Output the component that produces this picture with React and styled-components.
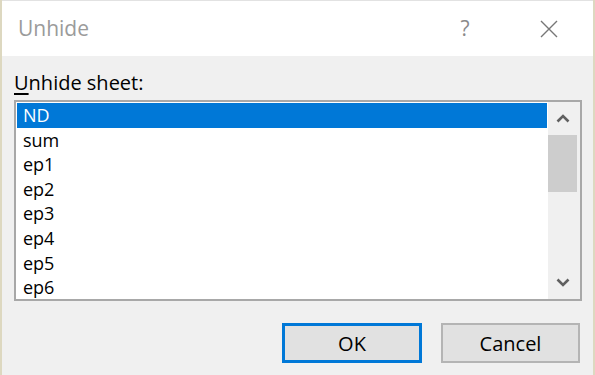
import React from "react";
import styled, { createGlobalStyle } from "styled-components";

const Global = createGlobalStyle`
  html, body { margin: 0; padding: 0; }
  body {
    background: #ddd8c0;
    font-family: "Open Sans", "Noto Sans", sans-serif;
    overflow: hidden;
  }
`;

const Page = styled.div`
  width: 595px;
  height: 375px;
  display: flex;
  background: #ddd8c0;
`;

const Dialog = styled.div`
  flex: 1;
  margin: 0 2px;
  display: flex;
  flex-direction: column;
  background: #f0f0f0;
  border-top: 1px solid #e2e2e2;
`;

const TitleBar = styled.div`
  height: 55px;
  background: #ffffff;
  display: flex;
  align-items: center;
  padding-left: 16px;
`;

const Title = styled.div`
  flex: 1;
  font-size: 21px;
  color: #9b9b9b;
  margin-top: -1px;
`;

const Help = styled.div`
  width: 20px;
  text-align: center;
  font-size: 21px;
  color: #8a8a8a;
  margin-right: 64px;
  margin-top: -1px;
`;

const CloseBtn = styled.div`
  width: 20px;
  height: 20px;
  margin-right: 34px;
  display: flex;
  align-items: center;
  justify-content: center;
`;

const Body = styled.div`
  flex: 1;
  display: flex;
  flex-direction: column;
  padding: 13px 11px 0 12px;
`;

const Label = styled.div`
  font-size: 20px;
  color: #000;
  line-height: 28px;
  margin-bottom: 3px;
  u { text-decoration-thickness: 2px; text-underline-offset: 3px; }
`;

const ListBox = styled.div`
  height: 201px;
  box-sizing: border-box;
  border: 2px solid #a8a8a8;
  background: #fff;
  display: flex;
`;

const Items = styled.div`
  flex: 1;
  padding: 1px 1px 0 1px;
  overflow: hidden;
`;

const Item = styled.div`
  height: 24.6px;
  line-height: 24.6px;
  padding-left: 6px;
  font-size: 18px;
  color: ${(p) => (p.$selected ? "#ffffff" : "#000000")};
  background: ${(p) => (p.$selected ? "#0078d7" : "transparent")};
  white-space: nowrap;
`;

const ScrollBar = styled.div`
  width: 32px;
  background: #f0f0f0;
  display: flex;
  flex-direction: column;
`;

const Arrow = styled.div`
  height: 33px;
  display: flex;
  align-items: center;
  justify-content: center;
  padding-right: 3px;
`;

const Track = styled.div`
  flex: 1;
  display: flex;
  flex-direction: column;
`;

const Thumb = styled.div`
  width: 29px;
  height: 57px;
  background: #cdcdcd;
`;

const Buttons = styled.div`
  display: flex;
  justify-content: flex-end;
  gap: 19px;
  margin-top: 22px;
  padding-right: 2px;
`;

const Button = styled.div`
  width: ${(p) => p.$w}px;
  height: 40px;
  box-sizing: border-box;
  background: #e1e1e1;
  border: ${(p) => (p.$default ? "3px solid #0078d7" : "2px solid #b4b4b4")};
  display: flex;
  align-items: center;
  justify-content: center;
  font-size: 20px;
  color: #000;
`;

const Chevron = ({ up }) => (
  <svg width="14" height="9" viewBox="0 0 14 9">
    <path
      d={up ? "M1.5 7.5 L7 2 L12.5 7.5" : "M1.5 1.5 L7 7 L12.5 1.5"}
      fill="none"
      stroke="#606060"
      strokeWidth="2.6"
    />
  </svg>
);

const items = ["ND", "sum", "ep1", "ep2", "ep3", "ep4", "ep5", "ep6"];

export default function App() {
  return (
    <>
      <Global />
      <Page>
        <Dialog>
          <TitleBar>
            <Title>Unhide</Title>
            <Help>?</Help>
            <CloseBtn>
              <svg width="20" height="20" viewBox="0 0 20 20">
                <path d="M2 2 L18 18 M18 2 L2 18" stroke="#777" strokeWidth="1.4" />
              </svg>
            </CloseBtn>
          </TitleBar>
          <Body>
            <Label>
              <u>U</u>nhide sheet:
            </Label>
            <ListBox>
              <Items>
                {items.map((it, i) => (
                  <Item key={it} $selected={i === 0}>
                    {it}
                  </Item>
                ))}
              </Items>
              <ScrollBar>
                <Arrow>
                  <Chevron up />
                </Arrow>
                <Track>
                  <Thumb />
                </Track>
                <Arrow>
                  <Chevron />
                </Arrow>
              </ScrollBar>
            </ListBox>
            <Buttons>
              <Button $default $w={140}>OK</Button>
              <Button $w={139}>Cancel</Button>
            </Buttons>
          </Body>
        </Dialog>
      </Page>
    </>
  );
}
